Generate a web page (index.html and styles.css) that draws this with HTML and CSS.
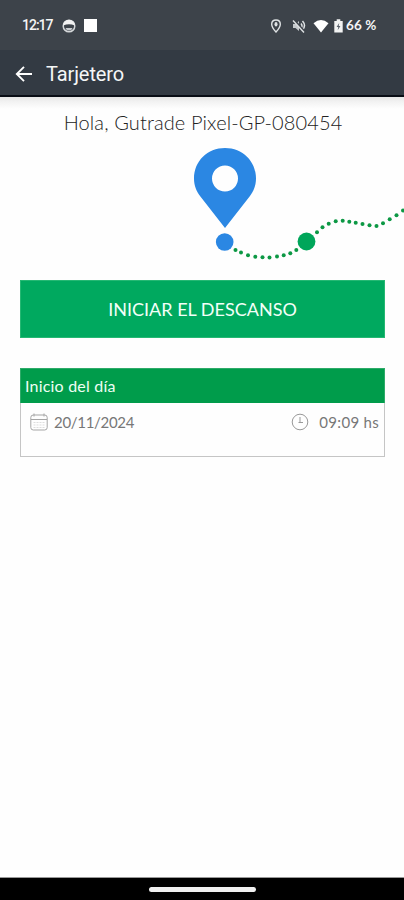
FILE: index.html
```
<!DOCTYPE html>
<html lang="es">
<head>
<meta charset="utf-8">
<meta name="viewport" content="width=device-width, initial-scale=1">
<title>Tarjetero</title>
<link rel="stylesheet" href="styles.css">
</head>
<body>
<div class="screen">
  <div class="status">
    <span class="clock">12:17</span>
    <svg class="face" width="14" height="14" viewBox="0 0 14 14"><circle cx="7" cy="7" r="5.800" fill="none" stroke="#d4d7d9" stroke-width="1.500"/><path d="M1.200 6.500a5.800 5.800 0 0 1 11.600 0q-5.800-2.500-11.600 0z" fill="#f2f2f2"/><path d="M3.500 9h7q-.8 2.500-3.500 2.500t-3.500-2.500z" fill="#c8cbce"/></svg>
    <span class="square"></span>
    <svg class="loc" width="12" height="14" viewBox="0 0 12 14"><path d="M6 1C3.500 1 1.700 2.800 1.700 5.200 1.700 8.200 6 13 6 13s4.300-4.800 4.300-7.800C10.300 2.800 8.500 1 6 1z" fill="none" stroke="#dfe2e4" stroke-width="1.400"/><ellipse cx="6" cy="5.300" rx="1.500" ry="2.200" fill="#dfe2e4"/></svg>
    <svg class="mute" width="14" height="14" viewBox="0 0 14 14"><path d="M1 5h2.500L7 2v10L3.500 9H1z" fill="#c6cacd"/><path d="M9 4.500q2 2.500 0 5M10.500 2q4 4.500 0 9" fill="none" stroke="#dfe2e4" stroke-width="1.500"/><path d="M2 1l11 12" stroke="#3d434a" stroke-width="2"/><path d="M1 1.500l11 12" stroke="#dfe2e4" stroke-width="1.400"/></svg>
    <svg class="wifi" width="16" height="14" viewBox="0 0 16 14"><path d="M.5 4.300Q8-2.300 15.500 4.300L8 13.500z" fill="#fff"/></svg>
    <svg class="battery" width="9" height="14" viewBox="0 0 9 14"><path d="M.3 2h2.400V.3h3.600V2h2.400v11.500H.3z" fill="#f2f3f3"/><path d="M5.200 4L2.600 8h1.700l-.6 3.300 2.700-4.200H4.700z" fill="#59606a"/></svg>
    <span class="percent">66 %</span>
  </div>
  <header class="appbar">
    <svg class="back" width="18" height="18" viewBox="0 0 18 18"><path d="M17 9H2M9 1.800L1.800 9 9 16.200" fill="none" stroke="#fff" stroke-width="1.900"/></svg>
    <h1 class="title">Tarjetero</h1>
  </header>
  <main class="content">
    <p class="greeting">Hola, Gutrade Pixel-GP-080454</p>
    <svg class="route" width="404" height="130" viewBox="0 140 404 130">
      <path fill-rule="evenodd" fill="#2b87e3" d="M225 148C207.500 148 194 161 194 178.500C194 185.500 196.300 191 200.200 196.300L225 228L249.800 196.300C253.700 191 256 185.500 256 178.500C256 161 242.500 148 225 148ZM225 165.500a13 13 0 1 1 0 26a13 13 0 1 1 0-26z"/>
      <circle cx="224.700" cy="242" r="8.800" fill="#2b87e3"/>
      <circle cx="306.500" cy="241.500" r="8.900" fill="#00a65a"/>
      <g fill="#0c9844">
        <circle cx="235.500" cy="250" r="2"/><circle cx="241" cy="252.600" r="2"/><circle cx="248" cy="255.300" r="2"/><circle cx="255.300" cy="256.800" r="2"/><circle cx="262.500" cy="257.300" r="2"/><circle cx="269.500" cy="257.400" r="2"/><circle cx="277" cy="256.600" r="2"/><circle cx="283.700" cy="255.300" r="2"/><circle cx="290.300" cy="253.200" r="2"/><circle cx="296.300" cy="250" r="2"/>
        <circle cx="317" cy="232.300" r="2"/><circle cx="322.500" cy="227.200" r="2"/><circle cx="328.700" cy="223.700" r="2"/><circle cx="335.700" cy="221.300" r="2"/><circle cx="342.700" cy="220.700" r="2"/><circle cx="349.300" cy="221.700" r="2"/><circle cx="355.700" cy="222.700" r="2"/><circle cx="362.500" cy="224" r="2"/><circle cx="369.500" cy="225.300" r="2"/><circle cx="376.500" cy="226" r="2"/><circle cx="383" cy="223.300" r="2"/><circle cx="389.700" cy="219.300" r="2"/><circle cx="396.500" cy="215.300" r="2"/><circle cx="403" cy="210.500" r="2"/>
      </g>
    </svg>
    <button class="action" type="button">INICIAR EL DESCANSO</button>
    <section class="card">
      <h2 class="card-title">Inicio del día</h2>
      <div class="card-row">
        <svg class="calendar" width="18" height="18" viewBox="0 0 18 18" fill="none" stroke="#a5a5a5"><rect x=".8" y="2" width="16.400" height="15" rx="2.500"/><path d="M1 6.500h16M4 .5v3M14 .5v3"/><path d="M3.500 9.500h11M3.500 12h11M3.500 14.500h11" stroke="#ddd" stroke-dasharray="2 1"/></svg>
        <span class="date">20/11/2024</span>
        <svg class="timer" width="18" height="18" viewBox="0 0 18 18" fill="none" stroke="#999"><circle cx="9" cy="9" r="7.800"/><path d="M9 4v6M7.500 9.500H12"/></svg>
        <span class="time">09:09 hs</span>
      </div>
    </section>
  </main>
  <footer class="navbar"><span class="handle"></span></footer>
</div>
</body>
</html>
```
FILE: styles.css
```
* { box-sizing: border-box; }
body { margin: 0; background: #fefefe; font-family: Lato, sans-serif; }
svg { display: block; flex: none; }
span, h1, h2, p, button { white-space: nowrap; }
.screen { width: 404px; height: 900px; display: flex; flex-direction: column; overflow: hidden; }
.status { height: 50px; flex: none; background: #3d434a; display: flex; align-items: center; padding: 1px 0 0 22px; color: #f4f5f5; font-family: Roboto, sans-serif; font-weight: 500; }
.clock { width: 31px; margin-top: -2px; font-size: 14px; letter-spacing: -1px; }
.face { margin-left: 9px; }
.square { width: 13px; height: 13px; background: #fff; margin-left: 8px; }
.loc { margin-left: 173px; }
.mute { margin-left: 10px; }
.wifi { margin-left: 7px; }
.battery { margin-left: 5px; }
.percent { margin: -1px 0 0 3px; font-family: Lato, sans-serif; font-size: 13.500px; font-weight: 700; letter-spacing: .1px; }
.appbar { height: 47px; flex: none; background: #333a43; border-bottom: 2px solid #090d15; display: flex; align-items: center; padding: 2px 0 0 15px; color: #f5f6f7; }
.title { margin: 0 0 0 13px; font: 400 20px/24px Roboto, sans-serif; letter-spacing: -.1px; }
.content { flex: 1; display: flex; flex-direction: column; background: linear-gradient(#e6e6e6 0, #f3f3f3 5px, #fefefe 12px); padding-top: 12px; }
.greeting { margin: 0; height: 31px; padding-left: 2px; text-align: center; font-size: 20px; line-height: 27px; font-weight: 300; color: #222; letter-spacing: .12px; }
.action { margin: 10px 19px 0 20px; height: 58px; flex: none; border: 1px solid #25b873; background: #00a95f; color: #f3fff8; font: 400 18px/24px Lato, sans-serif; padding: 0; }
.card { margin: 30px 19px 0 20px; height: 89px; border: 1px solid #c5c5c5; border-top: 0; }
.card-title { margin: 0 -1px; height: 35px; padding: 0 0 0 4px; background: #009c4b; border: 1px solid #2eab69; border-bottom: 0; color: #edfff4; font: 400 16px/34px Lato, sans-serif; letter-spacing: .2px; }
.card-row { display: flex; align-items: center; height: 37px; padding: 0 5px 0 9px; color: #777; font-size: 15px; }
.date { margin: 1px 0 0 6px; letter-spacing: -.3px; }
.timer { margin-left: auto; }
.time { margin: 1px 0 0 10px; letter-spacing: .3px; }
.navbar { height: 23px; flex: none; background: #000; border-top: 1px solid #999; display: flex; align-items: center; justify-content: center; }
.handle { width: 107px; height: 5px; border-radius: 3px; background: #f0f0f0; }
```
